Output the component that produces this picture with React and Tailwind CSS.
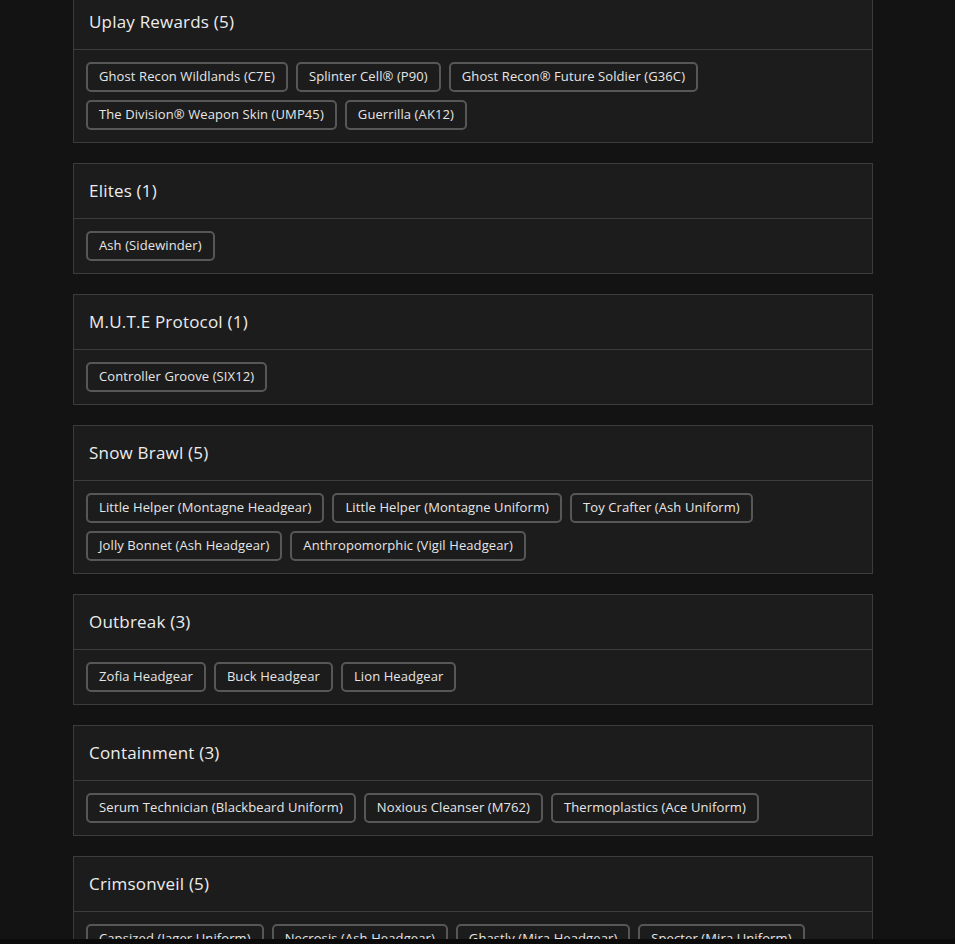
import React from "react";

const sections = [
  {
    title: "Uplay Rewards",
    items: [
      "Ghost Recon Wildlands (C7E)",
      "Splinter Cell® (P90)",
      "Ghost Recon® Future Soldier (G36C)",
      "The Division® Weapon Skin (UMP45)",
      "Guerrilla (AK12)",
    ],
  },
  { title: "Elites", items: ["Ash (Sidewinder)"] },
  { title: "M.U.T.E Protocol", items: ["Controller Groove (SIX12)"] },
  {
    title: "Snow Brawl",
    items: [
      "Little Helper (Montagne Headgear)",
      "Little Helper (Montagne Uniform)",
      "Toy Crafter (Ash Uniform)",
      "Jolly Bonnet (Ash Headgear)",
      "Anthropomorphic (Vigil Headgear)",
    ],
  },
  { title: "Outbreak", items: ["Zofia Headgear", "Buck Headgear", "Lion Headgear"] },
  {
    title: "Containment",
    items: [
      "Serum Technician (Blackbeard Uniform)",
      "Noxious Cleanser (M762)",
      "Thermoplastics (Ace Uniform)",
    ],
  },
  {
    title: "Crimsonveil",
    items: [
      "Capsized (Jager Uniform)",
      "Necrosis (Ash Headgear)",
      "Ghastly (Mira Headgear)",
      "Specter (Mira Uniform)",
      "Bloodline (Mira Headgear)",
    ],
  },
];

const Section = ({ title, items }) => (
  <div className="bg-[#1c1c1c] border border-[#3c3c3c]">
    <div className="h-[55px] px-[15px] flex items-center border-b border-[#3c3c3c]">
      <h2 className="text-[17px] font-medium tracking-[0.2px] text-[#ececec]">
        {title} ({items.length})
      </h2>
    </div>
    <div className="p-3 flex flex-wrap gap-2">
      {items.map((item) => (
        <span
          key={item}
          className="h-[30px] px-[11px] flex items-center border-2 border-[#575757] rounded-[5px] text-[13px] tracking-[0.1px] text-[#e6e6e6]"
        >
          {item}
        </span>
      ))}
    </div>
  </div>
);

const App = () => {
  return (
    <div
      className="h-screen flex flex-col bg-[#131313]"
      style={{ fontFamily: "'Open Sans', 'Noto Sans', sans-serif" }}
    >
      <div className="flex-1 overflow-hidden">
        <div className="w-[800px] ml-[73px] -mt-[6px] flex flex-col gap-5">
          {sections.map((s) => (
            <Section key={s.title} {...s} />
          ))}
        </div>
      </div>
      <div className="h-[5px] bg-[#0b0b0b]" />
    </div>
  );
};

export default App;
